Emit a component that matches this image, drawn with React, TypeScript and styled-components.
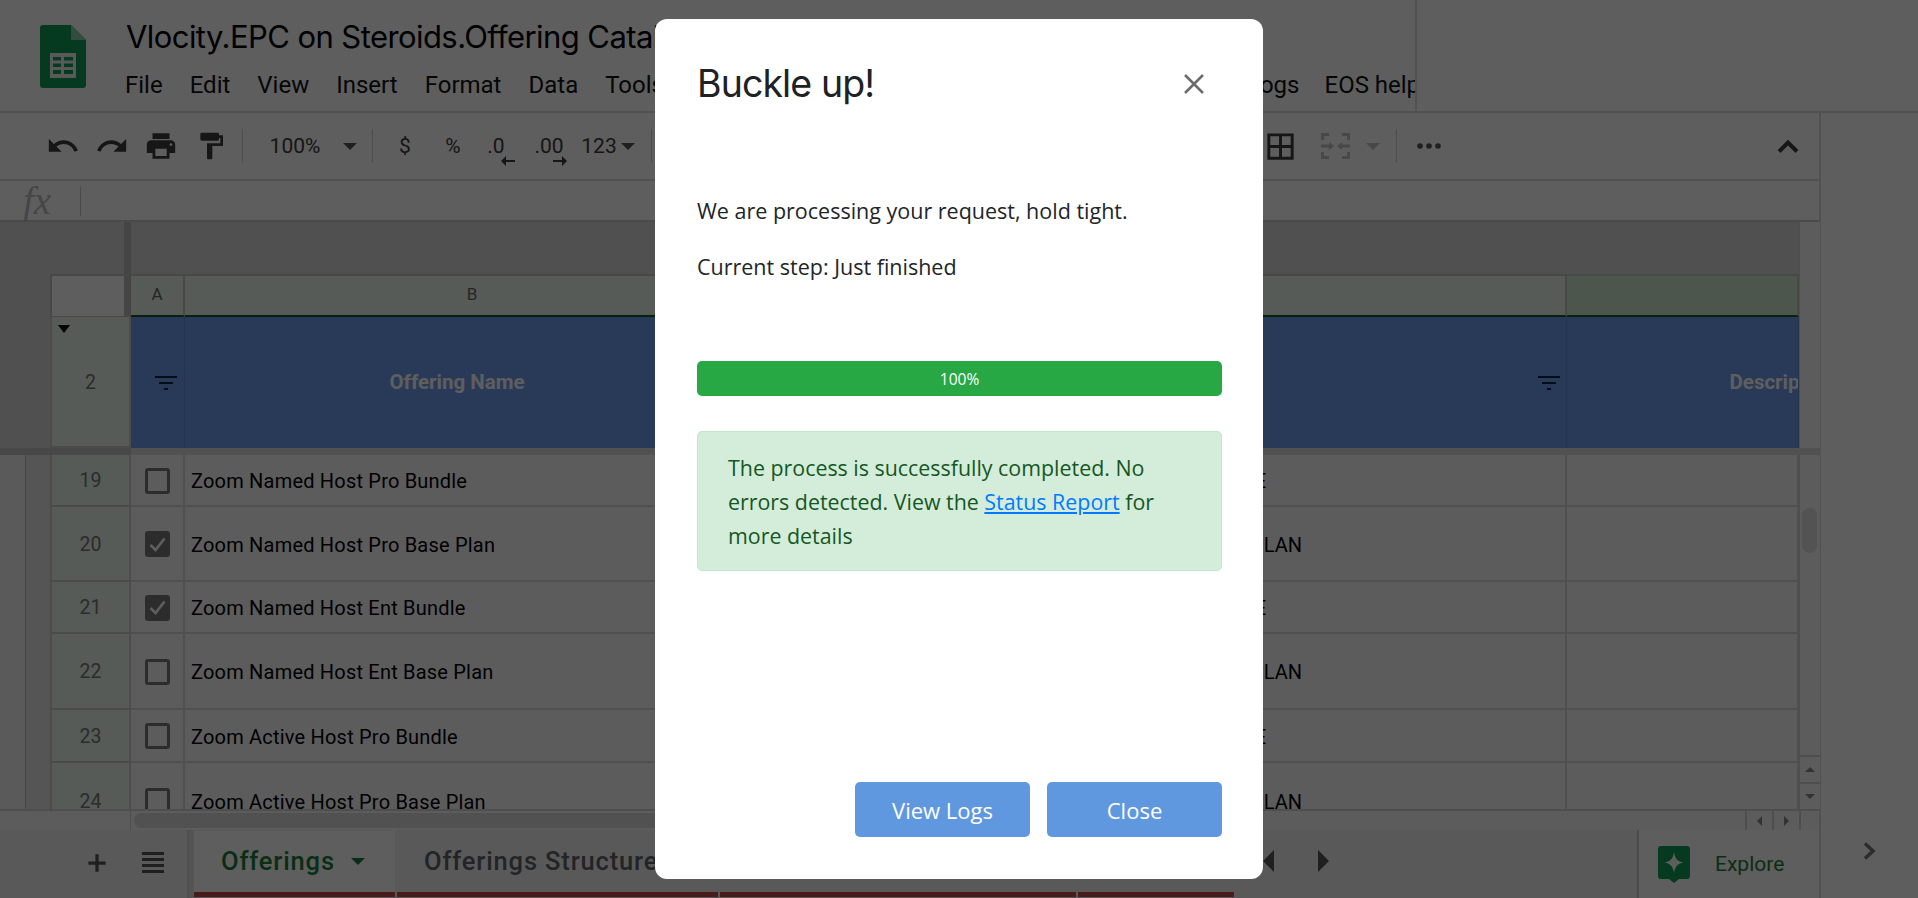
import React from "react";
import styled, { createGlobalStyle } from "styled-components";

const Global = createGlobalStyle`
  html, body { margin: 0; padding: 0; background: #fff; overflow: hidden; }
  #root { width: 1918px; height: 898px; }
  * { box-sizing: border-box; }
`;

const Page = styled.div`
  position: relative;
  width: 1918px;
  height: 898px;
  overflow: hidden;
  display: flex;
  flex-direction: column;
  font-family: Roboto, "Liberation Sans", sans-serif;
  color: #000;
  background: #fff;
`;

/* ---------- document header ---------- */
const Header = styled.header`
  height: 113px;
  flex: none;
  border-bottom: 2px solid #dadce0;
  display: flex;
`;
const HeaderClip = styled.div`
  width: 1417px;
  height: 111px;
  overflow: hidden;
  border-right: 2px solid #dadce0;
  display: flex;
  padding-left: 40px;
`;
const LogoSlot = styled.div`
  width: 86px;
  flex: none;
  padding-top: 25px;
`;
const TitleColumn = styled.div`
  flex: none;
  width: 1300px;
  display: flex;
  flex-direction: column;
`;
const DocTitle = styled.div`
  font-family: Inter, Roboto, sans-serif;
  font-size: 31px;
  line-height: 40px;
  margin-top: 17px;
  letter-spacing: -0.57px;
  white-space: nowrap;
`;
const MenuBar = styled.div`
  display: flex;
  align-items: center;
  margin-top: 10px;
  margin-left: -1px;
  font-size: 24px;
  line-height: 36px;
  white-space: nowrap;
  color: #111;
`;
const MenuGroup = styled.div`
  width: 1122px;
  flex: none;
  display: flex;
  gap: 27px;
`;
const LastMenus = styled.div`
  display: flex;
  gap: 25px;
`;

/* ---------- main frame ---------- */
const Frame = styled.div`
  flex: 1;
  display: flex;
  min-height: 0;
`;
const Main = styled.div`
  width: 1821px;
  flex: none;
  display: flex;
  flex-direction: column;
  border-right: 2px solid #dadce0;
`;
const SidePanel = styled.aside`
  flex: 1;
  display: flex;
  flex-direction: column;
  justify-content: flex-end;
  align-items: flex-start;
  padding: 0 0 38px 42px;
  color: #333;
`;

/* ---------- toolbar ---------- */
const Toolbar = styled.div`
  height: 68px;
  flex: none;
  border-bottom: 2px solid #dadce0;
  display: flex;
  align-items: center;
  padding-left: 38px;
`;
const Slot = styled.div<{ $w: number; $ml?: number }>`
  width: ${(p) => p.$w}px;
  margin-left: ${(p) => p.$ml ?? 0}px;
  flex: none;
  display: flex;
  align-items: center;
  justify-content: center;
  position: relative;
  font-size: 21px;
  color: #3c3c3c;
  white-space: nowrap;
`;
const ToolSep = styled.div<{ $ml: number }>`
  width: 1px;
  height: 34px;
  flex: none;
  background: #d4d4d4;
  margin-left: ${(p) => p.$ml}px;
`;
const Caret = styled.span<{ $ml?: number; $c?: string }>`
  display: block;
  flex: none;
  margin-left: ${(p) => p.$ml ?? 0}px;
  width: 0;
  height: 0;
  border-left: 7px solid transparent;
  border-right: 7px solid transparent;
  border-top: 7px solid ${(p) => p.$c ?? "#555"};
`;
const DecimalArrow = styled.svg<{ $right: number }>`
  position: absolute;
  bottom: -8px;
  right: ${(p) => p.$right}px;
`;

/* ---------- formula bar ---------- */
const FormulaBar = styled.div`
  height: 41px;
  flex: none;
  border-bottom: 2px solid #c8c8c8;
  display: flex;
  align-items: center;
  padding-left: 23px;
  padding-top: 1px;
`;
const Fx = styled.span`
  font-family: "Liberation Serif", serif;
  font-style: italic;
  font-size: 39px;
  line-height: 34px;
  width: 57px;
  color: #bdbdbd;
`;
const FxLine = styled.div`
  width: 1px;
  height: 29px;
  background: #c6c6c6;
`;

/* ---------- sheet grid ---------- */
const Sheet = styled.div`
  height: 608px;
  flex: none;
  display: flex;
  flex-direction: column;
`;
const Row = styled.div<{ $h: number; $bg?: string }>`
  height: ${(p) => p.$h}px;
  flex: none;
  display: grid;
  grid-template-columns: 50px 81px 54px 576px 806px 232px;
  background: ${(p) => p.$bg ?? "transparent"};
`;
const FrozenRow = styled(Row)`
  grid-template-columns: 50px 81px 54px 576px 806px 232px 21px;
`;
const DimCell = styled.div<{ $bg?: string; $divider?: boolean }>`
  background: ${(p) => p.$bg ?? "#dadada"};
  border-right: ${(p) => (p.$divider ? "7px solid #bcbcbc" : "none")};
`;
const Rail = styled.div`
  background: #fafafa;
  border-left: 1px solid #d4d4d4;
`;
const Corner = styled.div`
  background: #fff;
  border: 2px solid #c4c4c4;
  border-right: 7px solid #bcbcbc;
  border-bottom-width: 1px;
`;
const ColHead = styled.div<{ $tone?: string }>`
  background: ${(p) => p.$tone ?? "#e9f6eb"};
  border-top: 2px solid #c4c4c4;
  border-right: 2px solid #c4c4c4;
  border-bottom: 2px solid #0f5c2e;
  display: flex;
  align-items: center;
  justify-content: center;
  font-size: 17px;
  color: #666;
  padding-bottom: 3px;
`;
const RowHead = styled.div`
  position: relative;
  background: #e9f6eb;
  border-left: 2px solid #cfcfcf;
  border-right: 2px solid #d0d0d0;
  border-bottom: 2px solid #c6cec7;
  display: flex;
  align-items: center;
  justify-content: center;
  font-size: 19.5px;
  color: #777;
  padding-top: 1px;
`;
const FreezeArrow = styled.span`
  position: absolute;
  left: 6px;
  top: 8px;
  width: 0;
  height: 0;
  border-left: 6px solid transparent;
  border-right: 6px solid transparent;
  border-top: 8px solid #000;
`;
const BlueCell = styled.div`
  position: relative;
  background: #6d9eeb;
  border-right: 1px solid #6390d8;
  display: flex;
  align-items: center;
  justify-content: center;
  font-weight: 700;
  font-size: 20.5px;
  color: #fff;
  padding-right: 31px;
  padding-bottom: 2px;
  overflow: hidden;
`;
const DescLabel = styled.span`
  white-space: nowrap;
  margin-left: 201px;
  margin-right: -200px;
  flex: none;
  width: 276px;
`;
const FilterIcon = styled.svg<{ $right: number }>`
  position: absolute;
  right: ${(p) => p.$right}px;
  top: 59px;
`;
const FreezeBand = styled.div`
  height: 7px;
  flex: none;
  display: flex;
`;
const BandLeft = styled.div`
  width: 131px;
  background: #c4c4c4;
`;
const BandRight = styled.div`
  flex: 1;
  background: #dcdcde;
`;
const Body = styled.div`
  height: 354px;
  flex: none;
  display: flex;
`;
const BodyRows = styled.div`
  width: 1799px;
  flex: none;
  overflow: hidden;
`;
const GutterA = styled.div`
  background: linear-gradient(90deg, #f3f3f3 0 25px, #bcbcbc 25px 26px, #e6e6e6 26px 50px);
`;
const Cell = styled.div`
  background: #fafafa;
  border-right: 2px solid #dadada;
  border-bottom: 2px solid #dadada;
  display: flex;
  align-items: center;
  min-width: 0;
`;
const BoxCell = styled(Cell)`
  justify-content: center;
`;
const Check = styled.span<{ $on?: boolean }>`
  width: 25px;
  height: 26px;
  border-radius: 3px;
  border: 3px solid #777;
  background: ${(p) => (p.$on ? "#777" : "transparent")};
  display: flex;
  align-items: center;
  justify-content: center;
  margin-top: 1px;
`;
const NameText = styled.span`
  font-size: 20px;
  padding-left: 6px;
  white-space: nowrap;
  letter-spacing: 0.2px;
  padding-top: 2px;
`;
const KindCell = styled(Cell)<{ $pr: number }>`
  justify-content: flex-end;
  padding-right: ${(p) => p.$pr}px;
  padding-top: 2px;
  font-size: 20px;
  white-space: nowrap;
`;
const VScroll = styled.div`
  width: 21px;
  flex: none;
  display: flex;
  flex-direction: column;
  align-items: center;
  background: #fafafa;
  border-left: 1px solid #d4d4d4;
`;
const VThumb = styled.div`
  width: 15px;
  height: 45px;
  margin-top: 53px;
  margin-left: -1px;
  border-radius: 8px;
  background: #e0e0e0;
`;
const VBtn = styled.div<{ $first?: boolean }>`
  width: 100%;
  height: 27px;
  margin-top: ${(p) => (p.$first ? "auto" : "0")};
  display: flex;
  align-items: center;
  justify-content: center;
  border-top: 2px solid #d4d4d4;
`;
const Tri = styled.span<{ $dir: "up" | "down" | "left" | "right"; $s?: number; $c?: string }>`
  display: block;
  width: 0;
  height: 0;
  ${(p) => {
    const s = p.$s ?? 5;
    const c = p.$c ?? "#8a8a8a";
    if (p.$dir === "up") return `border-left:${s}px solid transparent;border-right:${s}px solid transparent;border-bottom:${s}px solid ${c};`;
    if (p.$dir === "down") return `border-left:${s}px solid transparent;border-right:${s}px solid transparent;border-top:${s}px solid ${c};`;
    if (p.$dir === "left") return `border-top:${s}px solid transparent;border-bottom:${s}px solid transparent;border-right:${s}px solid ${c};`;
    return `border-top:${s}px solid transparent;border-bottom:${s}px solid transparent;border-left:${s}px solid ${c};`;
  }}
`;
const HScroll = styled.div`
  height: 21px;
  flex: none;
  display: flex;
  align-items: center;
  background: #fafafa;
  border-top: 2px solid #d4d4d4;
`;
const HStart = styled.div`
  width: 131px;
  height: 100%;
  border-right: 1px solid #d4d4d4;
  flex: none;
`;
const HThumb = styled.div`
  width: 560px;
  height: 15px;
  margin-left: 3px;
  border-radius: 8px;
  background: #dcdcdc;
  flex: none;
`;
const HBtn = styled.div<{ $ml?: number }>`
  width: 27px;
  height: 100%;
  margin-left: ${(p) => p.$ml ?? 0}px;
  flex: none;
  border-left: 2px solid #d4d4d4;
  display: flex;
  align-items: center;
  justify-content: center;
`;

/* ---------- tab bar ---------- */
const TabBar = styled.div`
  flex: 1;
  display: flex;
  background: #f0f2f4;
`;
const TabLead = styled.div`
  width: 187px;
  flex: none;
  display: flex;
  align-items: center;
  padding-left: 84px;
  padding-bottom: 2px;
  gap: 32px;
  color: #555;
`;
const TabEdge = styled.div`
  width: 7px;
  flex: none;
  background: linear-gradient(90deg, #d9d9d9, #e6e8ea);
`;
const Tab = styled.div<{ $w: number; $active?: boolean }>`
  width: ${(p) => p.$w}px;
  margin-right: 2px;
  flex: none;
  height: 66px;
  margin-top: 1px;
  display: flex;
  align-items: center;
  padding-left: 27px;
  padding-bottom: 1px;
  background: ${(p) => (p.$active ? "#fff" : "transparent")};
  border-bottom: 5px solid #c94a4a;
  color: ${(p) => (p.$active ? "#188038" : "#5f6368")};
  font-family: Roboto, sans-serif;
  font-weight: 500;
  font-size: 25.5px;
  letter-spacing: 0.85px;
  white-space: nowrap;
  overflow: hidden;
`;
const TabNav = styled.div<{ $ml: number }>`
  margin-left: ${(p) => p.$ml}px;
  flex: none;
  align-self: center;
  margin-top: -6px;
`;
const Explore = styled.div`
  width: 182px;
  margin-left: auto;
  flex: none;
  background: #fff;
  border-left: 2px solid #c8c8c8;
  display: flex;
  align-items: center;
  padding-left: 19px;
  gap: 25px;
  color: #188038;
  font-size: 21px;
`;

/* ---------- dialog ---------- */
const Backdrop = styled.div`
  position: absolute;
  inset: 0;
  background: rgba(0, 0, 0, 0.63);
`;
const Dialog = styled.div`
  position: absolute;
  left: 655px;
  top: 19px;
  width: 608px;
  height: 860px;
  background: #fff;
  border-radius: 12px;
  padding: 42px 41px 42px 42px;
  display: flex;
  flex-direction: column;
  font-family: "Open Sans", "Noto Sans", sans-serif;
  color: #212529;
`;
const DialogHead = styled.div`
  display: flex;
  justify-content: space-between;
  align-items: center;
  height: 46px;
  flex: none;
`;
const DialogTitle = styled.h2`
  margin: 0;
  font-family: Inter, Roboto, sans-serif;
  font-weight: 400;
  font-size: 37.5px;
  line-height: 46px;
  letter-spacing: -0.9px;
  color: #202124;
`;
const CloseBtn = styled.span`
  display: flex;
  margin-right: 18px;
  color: #6c6c6c;
`;
const Para = styled.p<{ $mt: number }>`
  margin: ${(p) => p.$mt}px 0 0;
  font-size: 21.5px;
  line-height: 34px;
  white-space: nowrap;
`;
const Progress = styled.div`
  height: 35px;
  margin-top: 77px;
  flex: none;
  border-radius: 5px;
  background: #e9ecef;
  overflow: hidden;
  display: flex;
`;
const ProgressFill = styled.div`
  background: #28a745;
  color: #fff;
  font-size: 15.5px;
  display: flex;
  align-items: center;
  justify-content: center;
`;
const Alert = styled.div`
  margin-top: 35px;
  flex: none;
  height: 140px;
  padding: 19px 20px 17px 30px;
  border: 1px solid #c3e6cb;
  border-radius: 5px;
  background: #d4edda;
  color: #155724;
  font-size: 21.4px;
  line-height: 34px;
`;
const AlertLink = styled.a`
  color: #007bff;
  text-decoration: underline;
`;
const DialogFoot = styled.div`
  margin-top: auto;
  display: flex;
  justify-content: flex-end;
  gap: 17px;
`;
const DialogBtn = styled.button`
  width: 175px;
  height: 55px;
  border: 0;
  border-radius: 5px;
  background: #6098e0;
  color: #fff;
  font-family: inherit;
  font-size: 22px;
`;

/* ---------- icons ---------- */
const MI = ({ d, size = 34, color = "#3c3c3c" }: { d: string; size?: number; color?: string }) => (
  <svg width={size} height={size} viewBox="0 0 24 24" fill={color}>
    <path d={d} />
  </svg>
);

const SheetsLogo = () => (
  <svg width="46" height="63" viewBox="0 0 46 63">
    <path d="M3 0h28l15 15v45a3 3 0 0 1-3 3H3a3 3 0 0 1-3-3V3a3 3 0 0 1 3-3z" fill="#0f9d58" />
    <path d="M31 0l15 15H31z" fill="#87ceac" />
    <path d="M10 28h26v25H10z" fill="#f1f1f1" />
    <path d="M13 32h8v3.5h-8zM24 32h9v3.5h-9zM13 38.5h8v3.5h-8zM24 38.5h9v3.5h-9zM13 45h8v4h-8zM24 45h9v4h-9z" fill="#0f9d58" />
  </svg>
);

const Filter = ({ right }: { right: number }) => (
  <FilterIcon $right={right} width="22" height="14" viewBox="0 0 22 14">
    <rect x="0" y="0" width="22" height="2" fill="#0b2340" />
    <rect x="4" y="6" width="14" height="2" fill="#0b2340" />
    <rect x="9" y="12" width="4" height="2" fill="#0b2340" />
  </FilterIcon>
);

const CheckMark = () => (
  <svg width="17" height="15" viewBox="0 0 17 15" fill="none">
    <path d="M1.5 8l5 5L15.5 1.5" stroke="#fff" strokeWidth="2.6" />
  </svg>
);

const MergeIcon = () => (
  <svg width="29" height="26" viewBox="0 0 29 26" fill="none" stroke="#c4c4c4" strokeWidth="3">
    <path d="M1.5 7V1.5H8M21 1.5h6.5V7M1.5 19v5.5H8M21 24.5h6.5V19" />
    <path d="M0 13h11M18 13h11" />
    <path d="M8 9l5 4-5 4zM21 9l-5 4 5 4z" fill="#c4c4c4" stroke="none" />
  </svg>
);

const ExploreIcon = () => (
  <svg width="32" height="37" viewBox="0 0 32 37">
    <path d="M3 0h26a3 3 0 0 1 3 3v27a3 3 0 0 1-3 3h-8l-5 4-5-4H3a3 3 0 0 1-3-3V3a3 3 0 0 1 3-3z" fill="#0f9d58" />
    <path d="M16 6c1 6 3 9.5 9.5 10.5C19 17.500 17 21 16 27c-1-6-3-9.500-9.500-10.500C13 15.500 15 12 16 6z" fill="#fff" />
  </svg>
);

const rows = [
  { n: 19, h: 52, name: "Zoom Named Host Pro Bundle", kind: "BUNDLE", plan: false, on: false },
  { n: 20, h: 75, name: "Zoom Named Host Pro Base Plan", kind: "BASE PLAN", plan: true, on: true },
  { n: 21, h: 52, name: "Zoom Named Host Ent Bundle", kind: "BUNDLE", plan: false, on: true },
  { n: 22, h: 76, name: "Zoom Named Host Ent Base Plan", kind: "BASE PLAN", plan: true, on: false },
  { n: 23, h: 53, name: "Zoom Active Host Pro Bundle", kind: "BUNDLE", plan: false, on: false },
  { n: 24, h: 77, name: "Zoom Active Host Pro Base Plan", kind: "BASE PLAN", plan: true, on: false },
];

export default function App() {
  return (
    <Page>
      <Global />
      <Header>
        <HeaderClip>
          <LogoSlot>
            <SheetsLogo />
          </LogoSlot>
          <TitleColumn>
            <DocTitle>Vlocity.EPC on Steroids.Offering Catalog</DocTitle>
            <MenuBar>
              <MenuGroup>
                <span>File</span>
                <span>Edit</span>
                <span>View</span>
                <span>Insert</span>
                <span>Format</span>
                <span>Data</span>
                <span>Tools</span>
              </MenuGroup>
              <LastMenus>
                <span>Logs</span>
                <span>EOS help</span>
              </LastMenus>
            </MenuBar>
          </TitleColumn>
        </HeaderClip>
      </Header>

      <Frame>
        <Main>
          <Toolbar>
            <Slot $w={49}>
              <MI d="M12.5 8c-2.65 0-5.05.99-6.9 2.6L2 7v9h9l-3.62-3.62c1.39-1.16 3.16-1.88 5.12-1.88 3.54 0 6.55 2.31 7.6 5.5l2.37-.78C21.08 11.03 17.15 8 12.5 8z" />
            </Slot>
            <Slot $w={49}>
              <MI d="M18.4 10.6C16.55 8.99 14.15 8 11.5 8c-4.65 0-8.58 3.03-9.96 7.22L3.9 16c1.05-3.19 4.05-5.5 7.6-5.5 1.95 0 3.73.72 5.12 1.88L13 16h9V7l-3.6 3.6z" />
            </Slot>
            <Slot $w={50}>
              <MI d="M19 8H5c-1.66 0-3 1.34-3 3v6h4v4h12v-4h4v-6c0-1.66-1.34-3-3-3zm-3 11H8v-5h8v5zm3-7c-.55 0-1-.45-1-1s.45-1 1-1 1 .45 1 1-.45 1-1 1zm-1-9H6v4h12V3z" />
            </Slot>
            <Slot $w={50}>
              <MI size={32} d="M18 4V3c0-.55-.45-1-1-1H5c-.55 0-1 .45-1 1v4c0 .55.45 1 1 1h12c.55 0 1-.45 1-1V6h1v4H9v11c0 .55.45 1 1 1h2c.55 0 1-.45 1-1v-9h8V4h-3z" />
            </Slot>
            <ToolSep $ml={6} />
            <Slot $w={52} $ml={26}>100%</Slot>
            <Caret $ml={22} />
            <ToolSep $ml={15} />
            <Slot $w={20} $ml={22}>$</Slot>
            <Slot $w={24} $ml={26}>%</Slot>
            <Slot $w={24} $ml={19}>
              .0
              <DecimalArrow $right={-7} width="14" height="10" viewBox="0 0 14 10">
                <path d="M14 4H5V0L0 5l5 5V6h9z" fill="#3c3c3c" />
              </DecimalArrow>
            </Slot>
            <Slot $w={32} $ml={25}>
              .00
              <DecimalArrow $right={-2} width="14" height="10" viewBox="0 0 14 10">
                <path d="M0 4h9V0l5 5-5 5V6H0z" fill="#3c3c3c" />
              </DecimalArrow>
            </Slot>
            <Slot $w={36} $ml={16}>123</Slot>
            <Caret $ml={4} />
            <ToolSep $ml={16} />
            <Slot $w={35} $ml={611}>
              <MI size={35} d="M3 3v18h18V3H3zm8 16H5v-6h6v6zm0-8H5V5h6v6zm8 8h-6v-6h6v6zm0-8h-6V5h6v6z" />
            </Slot>
            <Slot $w={29} $ml={23}>
              <MergeIcon />
            </Slot>
            <Caret $ml={16} $c="#c4c4c4" />
            <ToolSep $ml={16} />
            <Slot $w={26} $ml={19}>
              <svg width="24" height="6" viewBox="0 0 24 6">
                <circle cx="3" cy="3" r="2.8" fill="#555" />
                <circle cx="12" cy="3" r="2.8" fill="#555" />
                <circle cx="21" cy="3" r="2.8" fill="#555" />
              </svg>
            </Slot>
            <Slot $w={24} $ml={334}>
              <svg width="22" height="14" viewBox="0 0 22 14" fill="none">
                <path d="M2 12.500l9-9 9 9" stroke="#3c3c3c" strokeWidth="4" />
              </svg>
            </Slot>
          </Toolbar>

          <FormulaBar>
            <Fx>fx</Fx>
            <FxLine />
          </FormulaBar>

          <Sheet>
            <FrozenRow $h={52}>
              <DimCell />
              <DimCell $divider />
              <DimCell />
              <DimCell />
              <DimCell />
              <DimCell />
              <Rail />
            </FrozenRow>
            <FrozenRow $h={43}>
              <DimCell />
              <Corner />
              <ColHead>A</ColHead>
              <ColHead>B</ColHead>
              <ColHead />
              <ColHead $tone="#d0e8d2" />
              <Rail />
            </FrozenRow>
            <FrozenRow $h={131}>
              <DimCell />
              <RowHead>
                <FreezeArrow />2
              </RowHead>
              <BlueCell>
                <Filter right={7} />
              </BlueCell>
              <BlueCell>Offering Name</BlueCell>
              <BlueCell>
                <Filter right={6} />
              </BlueCell>
              <BlueCell>
                <DescLabel>Description</DescLabel>
              </BlueCell>
              <Rail />
            </FrozenRow>
            <FreezeBand>
              <BandLeft />
              <BandRight />
            </FreezeBand>
            <Body>
              <BodyRows>
                {rows.map((r) => (
                  <Row key={r.n} $h={r.h}>
                    <GutterA />
                    <RowHead>{r.n}</RowHead>
                    <BoxCell>
                      <Check $on={r.on}>{r.on && <CheckMark />}</Check>
                    </BoxCell>
                    <Cell>
                      <NameText>{r.name}</NameText>
                    </Cell>
                    <KindCell $pr={r.plan ? 263 : 299}>{r.kind}</KindCell>
                    <Cell />
                  </Row>
                ))}
              </BodyRows>
              <VScroll>
                <VThumb />
                <VBtn $first>
                  <Tri $dir="up" />
                </VBtn>
                <VBtn>
                  <Tri $dir="down" />
                </VBtn>
              </VScroll>
            </Body>
            <HScroll>
              <HStart />
              <HThumb />
              <HBtn $ml={1051}>
                <Tri $dir="left" />
              </HBtn>
              <HBtn>
                <Tri $dir="right" />
              </HBtn>
              <HBtn />
            </HScroll>
          </Sheet>

          <TabBar>
            <TabLead>
              <MI size={26} color="#555" d="M20 13.500h-6.500V20h-3v-6.500H4v-3h6.500V4h3v6.500H20z" />
              <svg width="22" height="22" viewBox="0 0 22 22" fill="#555">
                <path d="M0 0h22v3H0zM0 6h22v3H0zM0 12h22v3H0zM0 18h22v3H0z" />
              </svg>
            </TabLead>
            <TabEdge />
            <Tab $w={201} $active>
              Offerings
              <Caret $ml={16} $c="#188038" />
            </Tab>
            <Tab $w={321}>Offerings Structure</Tab>
            <Tab $w={356} />
            <Tab $w={156} />
            <TabNav $ml={27}>
              <Tri $dir="left" $s={11} $c="#555" />
            </TabNav>
            <TabNav $ml={44}>
              <Tri $dir="right" $s={11} $c="#555" />
            </TabNav>
            <Explore>
              <ExploreIcon />
              Explore
            </Explore>
          </TabBar>
        </Main>
        <SidePanel>
          <svg width="14" height="18" viewBox="0 0 14 18" fill="none">
            <path d="M2 1.500l8 7.500-8 7.500" stroke="#777" strokeWidth="3.500" />
          </svg>
        </SidePanel>
      </Frame>

      <Backdrop />
      <Dialog>
        <DialogHead>
          <DialogTitle>Buckle up!</DialogTitle>
          <CloseBtn>
            <svg width="20" height="20" viewBox="0 0 20 20" fill="none">
              <path d="M1 1l18 18M19 1L1 19" stroke="currentColor" strokeWidth="2.500" />
            </svg>
          </CloseBtn>
        </DialogHead>
        <Para $mt={87}>We are processing your request, hold tight.</Para>
        <Para $mt={22}>Current step: Just finished</Para>
        <Progress>
          <ProgressFill style={{ width: "100%" }}>100%</ProgressFill>
        </Progress>
        <Alert>
          The process is successfully completed. No errors detected. View the{" "}
          <AlertLink href="#">Status Report</AlertLink> for more details
        </Alert>
        <DialogFoot>
          <DialogBtn>View Logs</DialogBtn>
          <DialogBtn>Close</DialogBtn>
        </DialogFoot>
      </Dialog>
    </Page>
  );
}
